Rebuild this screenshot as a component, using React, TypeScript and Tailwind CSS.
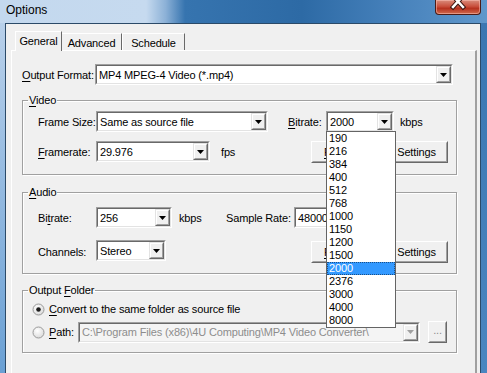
import React from "react";

const ui = "font-['Liberation_Sans',Arial,sans-serif] text-[11px] tracking-[-0.15px] leading-[14px] text-black whitespace-nowrap";

const bitrates = ["190", "216", "384", "400", "512", "768", "1000", "1150", "1200", "1500", "2000", "2376", "3000", "4000", "8000"];

function Arrow({ disabled }: { disabled?: boolean }) {
  return (
    <div className="h-full w-[15px] shrink-0 border border-t-[#e3e3e3] border-l-[#e3e3e3] border-b-[#696969] border-r-[#696969] bg-[#f0f0f0]">
      <div className="flex h-full items-center justify-center border border-t-white border-l-white border-b-[#a0a0a0] border-r-[#a0a0a0]">
        <svg width="7" height="4" viewBox="0 0 7 4">
          <polygon points="0,0 7,0 3.5,4" fill={disabled ? "#a0a0a0" : "#000"} />
        </svg>
      </div>
    </div>
  );
}

function Combo({ value, className, disabled, children }: { value: string; className: string; disabled?: boolean; children?: React.ReactNode }) {
  return (
    <div className={`relative shrink-0 border border-t-[#a0a0a0] border-l-[#a0a0a0] border-b-white border-r-white ${className}`}>
      <div className={`flex h-full items-center border border-t-[#696969] border-l-[#696969] border-b-[#e3e3e3] border-r-[#e3e3e3] ${disabled ? "bg-[#f4f4f4]" : "bg-white"}`}>
        <span className={`flex-1 truncate pl-[2px] ${disabled ? "text-[#8d8d8d]" : ""}`}>{value}</span>
        <Arrow disabled={disabled} />
      </div>
      {children}
    </div>
  );
}

function Button({ className, children }: { className: string; children: React.ReactNode }) {
  return (
    <div className={`h-[22px] shrink-0 border border-t-white border-l-white border-b-[#696969] border-r-[#696969] bg-[#f0f0f0] ${className}`}>
      <div className="flex h-full items-center justify-center border border-t-[#f0f0f0] border-l-[#f0f0f0] border-b-[#a0a0a0] border-r-[#a0a0a0]">
        {children}
      </div>
    </div>
  );
}

function Group({ label, className, children }: { label: React.ReactNode; className?: string; children: React.ReactNode }) {
  return (
    <fieldset className={`w-[435px] border border-[#a0a0a0] shadow-[inset_1px_1px_0_#fff,1px_1px_0_#fff] ${className ?? ""}`}>
      <legend className="ml-[5px] px-[1px] leading-[14px]">{label}</legend>
      {children}
    </fieldset>
  );
}

function Radio({ checked }: { checked?: boolean }) {
  return (
    <svg width="13" height="13" viewBox="0 0 13 13" className="shrink-0">
      <defs>
        <radialGradient id={checked ? "rg1" : "rg2"} cx="0.4" cy="0.35" r="0.7">
          <stop offset="0" stopColor="#ffffff" />
          <stop offset="1" stopColor="#d9d9d9" />
        </radialGradient>
      </defs>
      <circle cx="6.5" cy="6.5" r="5.5" fill={`url(#${checked ? "rg1" : "rg2"})`} stroke="#9a9a9a" />
      {checked && <circle cx="6.5" cy="6.5" r="2.3" fill="#1c1c1c" />}
    </svg>
  );
}

function U({ children }: { children: React.ReactNode }) {
  return <span className="underline underline-offset-[2px]">{children}</span>;
}

// the left button sits under the open drop-down, only its first letter shows
function ButtonPair() {
  return (
    <div className="ml-auto flex gap-[4px]">
      <Button className="w-[70px]">
        <span className="w-full pl-[11px]">
          <U>F</U>
        </span>
      </Button>
      <Button className="w-[63px]">Settings</Button>
    </div>
  );
}

export default function App() {
  return (
    <div className={`${ui} h-[373px] w-[487px] overflow-hidden bg-gradient-to-r from-[#bdd4ec] via-[#2f6ea9] to-[#5590c6]`}>
      {/* title bar */}
      <div className="flex h-[23px] bg-[linear-gradient(90deg,#c3d8ee_0%,#c6daef_30%,#8cb1d7_34%,#3674af_38%,#2d6aa5_62%,#4580ba_80%,#5f97cb_100%)]">
        <div className="pl-[6px] pt-[3px] font-['Liberation_Sans',Arial,sans-serif] text-[12px] leading-[14px] tracking-normal text-black">Options</div>
        <div className="ml-auto mr-[6px] h-[15px] w-[46px] rounded-b-[4px] border border-t-0 border-[#4b1b16] bg-[linear-gradient(180deg,#d98c7c_0%,#c9503d_45%,#b6321f_60%,#cf6a4d_100%)] shadow-[inset_0_0_0_1px_rgba(255,200,190,0.5)]">
          <svg width="44" height="14" viewBox="0 0 44 14">
            <path d="M17 -4 L27 7 M27 -4 L17 7" stroke="#3a1410" strokeWidth="4.5" strokeLinecap="square" />
            <path d="M17 -4 L27 7 M27 -4 L17 7" stroke="#fff" strokeWidth="2.5" strokeLinecap="square" />
          </svg>
        </div>
      </div>

      <div className="flex h-[350px]">
        <div className="w-[5px] bg-gradient-to-b from-[#b8d0ea] to-[#6aa0d4]" />
        {/* client */}
        <div className="flex-1 border border-b-0 border-[#2b4a68] bg-[#f0f0f0] pl-[5px] pr-[3px] pt-[7px]">
          {/* tab strip */}
          <div className="relative z-10 flex h-[19px] items-end pl-[4px]">
            <div className="-mb-[1px] flex h-[20px] w-[47px] justify-center border-l border-t border-r border-l-white border-t-white border-r-[#696969] bg-[#f0f0f0] pt-[2px]">
              General
            </div>
            <div className="flex h-[17px] w-[60px] justify-center border-t border-r border-t-white border-r-[#696969] pt-[2px]">Advanced</div>
            <div className="flex h-[17px] w-[63px] justify-center border-l border-t border-r border-l-white border-t-white border-r-[#696969] pt-[2px]">Schedule</div>
          </div>

          {/* tab page */}
          <div className="h-[330px] border-l border-t border-r-2 border-l-white border-t-white border-r-[#a0a0a0] pl-[10px]">
            <div className="mt-[13px] flex h-[21px] items-center">
              <span className="w-[73px]">
                <U>O</U>utput Format:
              </span>
              <Combo value="MP4 MPEG-4 Video (*.mp4)" className="h-[21px] w-[358px]" />
            </div>

            <Group
              className="mt-[8px]"
              label={
                <>
                  <U>V</U>ideo
                </>
              }
            >
              <div className="pl-[15px] pr-[8px]">
                <div className="mt-[4px] flex h-[21px] items-center">
                  <span className="w-[58px]">Frame Size:</span>
                  <Combo value="Same as source file" className="h-[21px] w-[172px]" />
                  <span className="ml-[20px] w-[38px]">
                    <U>B</U>itrate:
                  </span>
                  <Combo value="2000" className="z-20 h-[21px] w-[68px]">
                    <div className="absolute left-[-1px] top-full w-[70px] border border-[#646464] bg-white">
                      {bitrates.map((b) => (
                        <div
                          key={b}
                          className={`h-[13px] pl-[2px] leading-[13px] ${b === "2000" ? "bg-[#3399ff] text-white outline-1 -outline-offset-1 outline-dotted outline-[#1b4f86]" : ""}`}
                        >
                          {b}
                        </div>
                      ))}
                    </div>
                  </Combo>
                  <span className="ml-[6px]">kbps</span>
                </div>
                <div className="mb-[11px] mt-[9px] flex h-[22px] items-center">
                  <span className="w-[58px]">
                    <U>F</U>ramerate:
                  </span>
                  <Combo value="29.976" className="h-[21px] w-[114px] self-start" />
                  <span className="ml-[11px]">fps</span>
                  <ButtonPair />
                </div>
              </div>
            </Group>

            <Group
              className="mt-[10px]"
              label={
                <>
                  <U>A</U>udio
                </>
              }
            >
              <div className="pl-[15px] pr-[8px]">
                <div className="mt-[8px] flex h-[21px] items-center">
                  <span className="w-[58px]">
                    Bi<U>t</U>rate:
                  </span>
                  <Combo value="256" className="h-[21px] w-[76px]" />
                  <span className="ml-[7px] w-[47px]">kbps</span>
                  <span className="w-[68px]">Sample Rate:</span>
                  <Combo value="48000" className="h-[21px] w-[76px]" />
                </div>
                <div className="mb-[10px] mt-[12px] flex h-[23px] items-start">
                  <span className="w-[58px] self-center">Channels:</span>
                  <Combo value="Stereo" className="h-[21px] w-[70px]" />
                  <div className="ml-auto mt-[1px] flex">
                    <ButtonPair />
                  </div>
                </div>
              </div>
            </Group>

            <Group
              className="mt-[9px]"
              label={
                <>
                  Output <U>F</U>older
                </>
              }
            >
              <div className="pl-[9px]">
                <div className="mt-[5px] flex h-[14px] items-center gap-[4px]">
                  <Radio checked />
                  <span>
                    <U>C</U>onvert to the same folder as source file
                  </span>
                </div>
                <div className="mb-[9px] mt-[5px] flex h-[22px] items-center">
                  <Radio />
                  <span className="ml-[4px] w-[29px]">
                    <U>P</U>ath:
                  </span>
                  <Combo value="C:\Program Files (x86)\4U Computing\MP4 Video Converter\" disabled className="h-[21px] w-[342px]" />
                  <Button className="ml-[8px] w-[19px]">
                    <span className="-mt-[4px] text-[#8d8d8d]">...</span>
                  </Button>
                </div>
              </div>
            </Group>
          </div>
        </div>
        <div className="w-[6px] bg-gradient-to-b from-[#3a76b1] to-[#4a86c0]" />
      </div>
    </div>
  );
}
